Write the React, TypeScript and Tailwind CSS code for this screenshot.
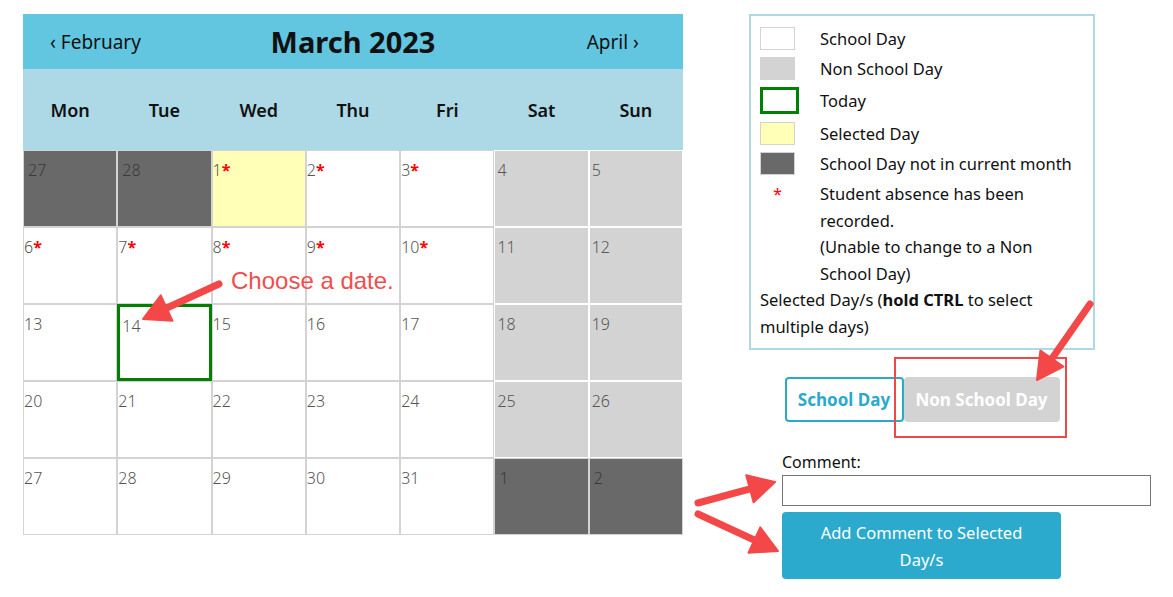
import React from 'react';

type Kind = 'school' | 'non' | 'dark' | 'selected' | 'today';

type Day = { n: number; kind: Kind; absent?: boolean };

const rows: Day[][] = [
  [
    { n: 27, kind: 'dark' },
    { n: 28, kind: 'dark' },
    { n: 1, kind: 'selected', absent: true },
    { n: 2, kind: 'school', absent: true },
    { n: 3, kind: 'school', absent: true },
    { n: 4, kind: 'non' },
    { n: 5, kind: 'non' },
  ],
  [
    { n: 6, kind: 'school', absent: true },
    { n: 7, kind: 'school', absent: true },
    { n: 8, kind: 'school', absent: true },
    { n: 9, kind: 'school', absent: true },
    { n: 10, kind: 'school', absent: true },
    { n: 11, kind: 'non' },
    { n: 12, kind: 'non' },
  ],
  [
    { n: 13, kind: 'school' },
    { n: 14, kind: 'today' },
    { n: 15, kind: 'school' },
    { n: 16, kind: 'school' },
    { n: 17, kind: 'school' },
    { n: 18, kind: 'non' },
    { n: 19, kind: 'non' },
  ],
  [
    { n: 20, kind: 'school' },
    { n: 21, kind: 'school' },
    { n: 22, kind: 'school' },
    { n: 23, kind: 'school' },
    { n: 24, kind: 'school' },
    { n: 25, kind: 'non' },
    { n: 26, kind: 'non' },
  ],
  [
    { n: 27, kind: 'school' },
    { n: 28, kind: 'school' },
    { n: 29, kind: 'school' },
    { n: 30, kind: 'school' },
    { n: 31, kind: 'school' },
    { n: 1, kind: 'dark' },
    { n: 2, kind: 'dark' },
  ],
];

const weekdays = ['Mon', 'Tue', 'Wed', 'Thu', 'Fri', 'Sat', 'Sun'];

const cellClass: Record<Kind, string> = {
  school: 'bg-white border border-[#d3d3d3] pl-0 text-[#555]',
  non: 'bg-[#d3d3d3] border border-white pl-[2px] text-[#555]',
  dark: 'bg-[#696969] border border-[#d3d3d3] pl-[4px] text-[#3a3a3a]',
  selected: 'bg-[#ffffb8] border border-[#d3d3d3] pl-0 text-[#555]',
  today: 'bg-white border-[3px] border-[#008000] pl-[2px] text-[#555]',
};

function Arrow({ x1, y1, x2, y2 }: { x1: number; y1: number; x2: number; y2: number }) {
  // head drawn as a triangle at (x2, y2)
  const dx = x2 - x1;
  const dy = y2 - y1;
  const len = Math.sqrt(dx * dx + dy * dy);
  const ux = dx / len;
  const uy = dy / len;
  const headLen = 26;
  const headW = 14;
  const bx = x2 - ux * headLen;
  const by = y2 - uy * headLen;
  const px = -uy;
  const py = ux;
  return (
    <g>
      <line x1={x1} y1={y1} x2={bx + ux * 4} y2={by + uy * 4} stroke="#f44848" strokeWidth={7} strokeLinecap="round" />
      <polygon
        points={`${x2},${y2} ${bx + px * headW},${by + py * headW} ${bx - px * headW},${by - py * headW}`}
        fill="#f44848"
        stroke="#f44848"
        strokeWidth={2}
        strokeLinejoin="round"
      />
    </g>
  );
}

function Calendar() {
  return (
    <div className="w-[660px] shrink-0">
      <div className="h-[55px] bg-[#62c6e0] flex items-center justify-between px-[27px] text-[#111]">
        <span className="text-[19px] w-[120px] pt-[2px]">‹ February</span>
        <span className="text-[29px] font-bold">March 2023</span>
        <span className="text-[19px] w-[120px] text-right pr-[17px] pt-[2px]">April ›</span>
      </div>
      <div className="h-[81px] bg-[#add8e6] grid grid-cols-7 items-center">
        {weekdays.map((d) => (
          <div key={d} className="text-center text-[18px] font-semibold text-[#111] pt-[2px]">
            {d}
          </div>
        ))}
      </div>
      <div className="grid grid-cols-7">
        {rows.map((r, i) =>
          r.map((d, j) => (
            <div
              key={`${i}-${j}`}
              className={`h-[77px] pt-[8px] text-[16px] leading-[22px] font-light ${cellClass[d.kind]}`}
            >
              {d.n}
              {d.absent && <span className="text-[#f00] font-bold">*</span>}
            </div>
          ))
        )}
      </div>
    </div>
  );
}

function Legend() {
  return (
    <div className="w-[346px] border-2 border-[#add8e6] pt-[9px] pb-[8px] pl-[9px] pr-2 text-[16.5px] text-[#111]">
      <div className="flex flex-col gap-[7px]">
        <div className="flex items-center leading-[23px] pt-[2px]">
          <div className="w-[35px] h-[23px] border border-[#d3d3d3] bg-white" />
          <span className="ml-[25px]">School Day</span>
        </div>
        <div className="flex items-center leading-[23px]">
          <div className="w-[35px] h-[23px] border border-[#d3d3d3] bg-[#d3d3d3]" />
          <span className="ml-[25px]">Non School Day</span>
        </div>
        <div className="flex items-center leading-[23px]">
          <div className="w-[39px] h-[27px] border-[3px] border-[#008000] bg-white" />
          <span className="ml-[21px]">Today</span>
        </div>
        <div className="flex items-center leading-[23px] pt-[1px]">
          <div className="w-[35px] h-[23px] border border-[#d3d3d3] bg-[#ffffb8]" />
          <span className="ml-[25px]">Selected Day</span>
        </div>
        <div className="flex items-center leading-[23px]">
          <div className="w-[35px] h-[23px] border border-[#d3d3d3] bg-[#696969]" />
          <span className="ml-[25px]">School Day not in current month</span>
        </div>
      </div>
      <div className="flex mt-[6px] leading-[26.5px]">
        <div className="w-[60px] shrink-0 pl-[13px] text-[#f00]">*</div>
        <div>
          Student absence has been
          <br />
          recorded.
          <br />
          (Unable to change to a Non
          <br />
          School Day)
        </div>
      </div>
      <p className="leading-[26.5px]">
        Selected Day/s (<b className="font-bold">hold CTRL</b> to select multiple days)
      </p>
    </div>
  );
}

export default function App() {
  return (
    <div
      className="relative w-[1173px] h-[597px] bg-white overflow-hidden"
      style={{ fontFamily: '"Noto Sans", "Open Sans", sans-serif' }}
    >
      <div className="flex pt-[14px] pl-[23px] gap-[66px]">
        <Calendar />
        <div className="flex flex-col">
          <Legend />
          <div className="flex justify-center mt-[27px] w-[346px]">
            <button className="h-[45px] w-[119px] border-2 border-[#2aa9cc] rounded-[4px] text-[#2aa9cc] font-bold text-[17px]">
              School Day
            </button>
            <button className="h-[45px] w-[156px] bg-[#d3d3d3] rounded-[4px] text-white font-bold text-[17px]">
              Non School Day
            </button>
          </div>
          <div className="ml-[33px] mt-[29px] flex flex-col">
            <label className="text-[16px] text-[#111] leading-[22px]">Comment:</label>
            <input className="w-[369px] h-[31px] border border-[#767676] mt-[2px]" />
            <button className="w-[279px] h-[67px] mt-[6px] bg-[#2baacd] rounded-[4px] text-white text-[16.5px] leading-[27px] px-[36px]">
              Add Comment to Selected Day/s
            </button>
          </div>
        </div>
      </div>

      {/* annotations */}
      <div className="absolute left-[894px] top-[357px] w-[173px] h-[81px] border-2 border-[#f04848] pointer-events-none" />
      <span
        className="absolute left-[231px] top-[267px] text-[24px] leading-[28px] text-[#f24d4d] pointer-events-none"
        style={{ fontFamily: '"Liberation Sans", Arial, sans-serif' }}
      >
        Choose a date.
      </span>
      <svg className="absolute inset-0 pointer-events-none" width={1173} height={597}>
        <Arrow x1={219} y1={284} x2={143} y2={319} />
        <Arrow x1={1090} y1={304} x2={1037} y2={380} />
        <Arrow x1={698} y1={503} x2={775} y2={482} />
        <Arrow x1={698} y1={514} x2={778} y2={551} />
      </svg>
    </div>
  );
}
